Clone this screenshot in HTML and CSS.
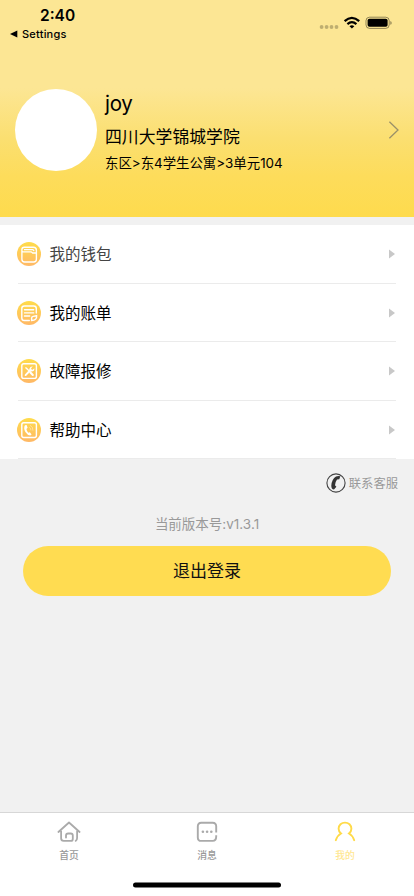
FILE: index.html
```html
<!DOCTYPE html>
<html lang="zh-CN">
<head>
<meta charset="utf-8">
<title>我的</title>
<link rel="stylesheet" href="styles.css">
</head>
<body>
<svg width="0" height="0" class="defs" aria-hidden="true">
  <defs>
    <linearGradient id="gold" x1="0" y1="0" x2="0" y2="1">
      <stop offset="0" stop-color="#ffdc4b"/><stop offset="1" stop-color="#ffb866"/>
    </linearGradient>
  </defs>
</svg>
<div class="screen">
  <header class="header">
    <div class="status">
      <div class="status-left">
        <div class="time">2:40</div>
        <div class="back"><svg width="8" height="8" viewBox="0 0 8 8"><path d="M0 4L7.3.4v7.2z"/></svg><span>Settings</span></div>
      </div>
      <svg class="status-icons" width="74" height="16" viewBox="0 0 74 16">
        <g fill="#000" opacity=".24"><circle cx="2.6" cy="12" r="1.9"/><circle cx="7.6" cy="12" r="1.9"/><circle cx="12.5" cy="12" r="1.9"/><circle cx="17.5" cy="12" r="1.9"/></g>
        <g fill="none" stroke="#000" stroke-width="2.3"><path d="M25.6 6.2Q32.9 -.4 40.2 6.2"/><path d="M28.4 9.1Q32.9 5.1 37.4 9.1"/></g>
        <path d="M30.5 11.2Q32.9 9.2 35.3 11.2L32.9 13.6z"/>
        <rect x="47" y="2.2" width="23.2" height="11.2" rx="3.5" fill="none" stroke="#000" stroke-opacity=".42"/>
        <rect x="48.6" y="3.8" width="20" height="8" rx="1.8"/>
        <path d="M71.4 6q1.2.5 1.2 1.9t-1.2 1.9z" opacity=".48"/>
      </svg>
    </div>
    <div class="profile">
      <div class="avatar"></div>
      <div class="info">
        <div class="name">joy</div>
        <div class="school">四川大学锦城学院</div>
        <div class="address">东区&gt;东4学生公寓&gt;3单元104</div>
      </div>
      <svg class="chevron" width="12" height="18" viewBox="0 0 12 18"><path d="M1.4.7L10 9L1.4 17.3" fill="none" stroke="#9b9169" stroke-width="1.3"/></svg>
    </div>
  </header>

  <nav class="menu">
    <a class="row muted">
      <svg class="icon" viewBox="0 0 24 24"><circle cx="12" cy="12" r="12" fill="url(#gold)"/><g fill="none" stroke="#fff" stroke-width="1.35"><path d="M4.9 10.5V7.5Q4.9 5.2 7.2 5.2H16.3Q19.4 5.2 19.4 8.3V17.3Q19.4 20 16.7 20H7.6Q4.9 20 4.9 17.3V10.6Q4.9 9.8 5.8 9.8H14.2L15.7 11H19.2"/><path d="M7 7.6h8.5q1.1 0 1.5 1.6"/></g></svg>
      <span class="label">我的钱包</span><svg class="arrow" width="8" height="10" viewBox="0 0 8 10"><path d="M1 .5L7 5L1 9.5z"/></svg>
    </a>
    <a class="row">
      <svg class="icon" viewBox="0 0 24 24"><circle cx="12" cy="12" r="12" fill="url(#gold)"/><g fill="none" stroke="#fff" stroke-width="1.4" stroke-linecap="round"><path d="M12.3 19.5H7.4Q4.8 19.5 4.8 16.9V7.6Q4.8 5 7.4 5H16.7Q19.3 5 19.3 7.6V12"/><path d="M7.5 8.8h9.2M7.5 11.9h9.2M7.5 15h5.2M14.6 19.5v-2.2q0-1.6 1.6-1.9l3.4-.7q.5 4.8-5 4.8z"/></g></svg>
      <span class="label">我的账单</span><svg class="arrow" width="8" height="10" viewBox="0 0 8 10"><path d="M1 .5L7 5L1 9.5z"/></svg>
    </a>
    <a class="row">
      <svg class="icon" viewBox="0 0 24 24"><circle cx="12" cy="12" r="12" fill="url(#gold)"/><rect x="4.8" y="4.8" width="14.6" height="14.6" rx="2" fill="none" stroke="#fff" stroke-width="1.4"/><path d="M8.2 8.1l1.5.4 4.3 4.5-.8.8-4.6-4.4z" fill="#fff"/><path d="M13.4 13.4l2.4 2.5" stroke="#fff" stroke-width="2.1" stroke-linecap="round"/><path d="M8.6 16.1L13.5 11" stroke="#fff" stroke-width="1.9" stroke-linecap="round"/><path d="M15.8 7.6l-1.7 1.7.3 1.3 1.3.2 1.6-1.5q.5 3.2-2.9 3.3-2.6-.4-1.9-3 .7-2.3 3.3-2z" fill="#fff"/></svg>
      <span class="label">故障报修</span><svg class="arrow" width="8" height="10" viewBox="0 0 8 10"><path d="M1 .5L7 5L1 9.5z"/></svg>
    </a>
    <a class="row">
      <svg class="icon" viewBox="0 0 24 24"><circle cx="12" cy="12" r="12" fill="url(#gold)"/><rect x="4.8" y="4.7" width="14.6" height="14.8" rx="2" fill="none" stroke="#fff" stroke-width="1.4"/><path d="M7.9 7.2l1.7-.3 1 2.9-1.2 1.1q.4 2.3 1.9 3.8l1.6-.5 1.7 2.2-1.3 1.2Q10.6 17.4 8.4 14 6.3 10.2 7.9 7.2z" fill="#fff"/><path d="M12.2 9.4q1.9.9 1.7 2.9M13 7.3q3.3 1.5 2.9 5.3" fill="none" stroke="#fff" stroke-opacity=".5" stroke-width=".8"/></svg>
      <span class="label">帮助中心</span><svg class="arrow" width="8" height="10" viewBox="0 0 8 10"><path d="M1 .5L7 5L1 9.5z"/></svg>
    </a>
  </nav>

  <div class="service">
    <svg width="20" height="20" viewBox="0 0 20 20"><circle cx="10" cy="10" r="9.1" fill="none" stroke="#444" stroke-width="1.1"/><path d="M10 3.6Q12.2 2.5 14.3 3.3L13.3 6.3 11 6.6Q9 9.4 9 12.3L10.4 13.7 8 16.6Q5.3 16.2 5.3 12.8 5.7 6.3 10 3.6z" fill="#333"/></svg>
    <span>联系客服</span>
  </div>
  <div class="version">当前版本号:v1.3.1</div>
  <button class="logout">退出登录</button>

  <footer class="tabs">
    <a class="tab">
      <svg width="24" height="24" viewBox="0 0 24 24" fill="none" stroke="#aaa" stroke-width="1.8" stroke-linecap="round" stroke-linejoin="round"><path d="M1.4 12L12 2.5L22.6 12M4.1 11.3V18.3Q4.1 20.9 6.7 20.9H13.8Q15.8 20.9 15.8 18.9V15.5Q15.8 13.5 13.8 13.5H11.2Q9 13.5 9 15.6V17.6M20.1 11.3V18.1Q20.1 20.3 18.7 20.9"/></svg>
      <span>首页</span>
    </a>
    <a class="tab">
      <svg width="24" height="24" viewBox="0 0 24 24" fill="none" stroke="#aaa" stroke-width="1.9"><path d="M21.2 12.5V6.2Q21.2 2.7 17.7 2.7H6.3Q2.8 2.7 2.8 6.2V17.4Q2.8 20.9 6.3 20.9H17.7Q21.2 20.9 21.2 16.6V15.2"/><g fill="#aaa" stroke="none"><circle cx="7.9" cy="11.8" r="1.3"/><circle cx="12.1" cy="11.8" r="1.3"/><circle cx="16.3" cy="11.8" r="1.3"/></g></svg>
      <span>消息</span>
    </a>
    <a class="tab active">
      <svg width="24" height="24" viewBox="0 0 24 24" fill="none" stroke="#ffda48" stroke-width="1.9" stroke-linecap="round"><path d="M2.8 20.2Q4.3 15.5 8 13.5 5.6 11.4 5.6 8.7 5.6 6 7.5 4.2 9.4 2.6 12 2.6 14.6 2.6 16.5 4.2 18.4 6 18.4 8.7 18.4 11.4 16 13.5 19.7 15.5 21.2 20.2"/></svg>
      <span>我的</span>
    </a>
  </footer>
  <div class="home"></div>
</div>
</body>
</html>
```
FILE: styles.css
```css
* { box-sizing: border-box; }
body {
  margin: 0;
  background: #f1f1f1;
  font-family: Inter, "Noto Sans CJK SC", sans-serif;
  color: #000;
}
.defs { position: absolute; }
.screen {
  width: 414px;
  height: 896px;
  display: flex;
  flex-direction: column;
  overflow: hidden;
}
.header {
  height: 217px;
  flex: none;
  background: linear-gradient(#fce694 0, #fce694 88px, #fbdf70 139px, #fddc5b 176px, #fedb4d 217px);
}
.status {
  display: flex;
  justify-content: space-between;
  height: 89px;
  padding: 7px 21px 0 10px;
}
.time {
  font-size: 15.5px;
  line-height: 18px;
  font-weight: 600;
  padding-left: 30px;
}
.back {
  display: flex;
  align-items: center;
  gap: 4px;
  font-size: 11px;
  line-height: 14px;
  font-weight: 500;
  letter-spacing: .22px;
  margin-top: 2px;
}
.status-icons { margin-top: 8px; }
.profile {
  display: flex;
  align-items: center;
  height: 82px;
  padding: 0 14px 0 15px;
}
.avatar {
  width: 82px;
  height: 82px;
  border-radius: 50%;
  background: #fff;
}
.info {
  flex: 1;
  padding-left: 8px;
  white-space: nowrap;
}
.name {
  font-family: Inter, sans-serif;
  font-size: 20.5px;
  line-height: 34px;
  letter-spacing: -.3px;
}
.school { font-size: 16.85px; line-height: 32px; }
.address { font-size: 13.4px; line-height: 20px; }
.chevron { flex: none; }
.menu {
  flex: none;
  margin-top: 8px;
  padding: 0 18px;
  background: #fff;
}
.row {
  display: flex;
  align-items: center;
  height: 58.5px;
  padding-top: 1px;
  border-bottom: 1px solid #ebebeb;
}
.icon { width: 24px; height: 24px; margin-left: -1px; }
.label { flex: 1; padding: 2px 0 0 8.5px; font-size: 15.5px; line-height: 24px; }
.muted .label { color: #444; }
.arrow { fill: #c8c8c8; }
.service {
  display: flex;
  justify-content: flex-end;
  align-items: center;
  gap: 3px;
  height: 20px;
  margin-top: 14px;
  padding-right: 16px;
  font-size: 12.3px;
  color: #999;
}
.version {
  margin-top: 21px;
  text-align: center;
  font-size: 13.5px;
  line-height: 20px;
  color: #999;
}
.logout {
  flex: none;
  margin: 12px 23px 0;
  height: 50px;
  border: 0;
  border-radius: 25px;
  background: #ffdc51;
  color: #111;
  font: 17px/50px Inter, "Noto Sans CJK SC", sans-serif;
  padding: 0;
}
.tabs {
  display: flex;
  flex: none;
  height: 70px;
  margin-top: auto;
  background: #fff;
  border-top: 1px solid #d7d7d7;
}
.tab {
  flex: 1;
  display: flex;
  flex-direction: column;
  align-items: center;
  padding-top: 7px;
  font-size: 9.8px;
  line-height: 14px;
  font-weight: 500;
  color: #999;
}
.tab span { margin-top: 5px; }
.active { color: #ffe792; }
.home {
  flex: none;
  height: 14px;
  background: #fff;
}
.home::before {
  content: "";
  display: block;
  width: 148px;
  height: 5px;
  margin: 0 auto;
  border-radius: 3px;
  background: #000;
  transform: translateY(.4px);
}
```
